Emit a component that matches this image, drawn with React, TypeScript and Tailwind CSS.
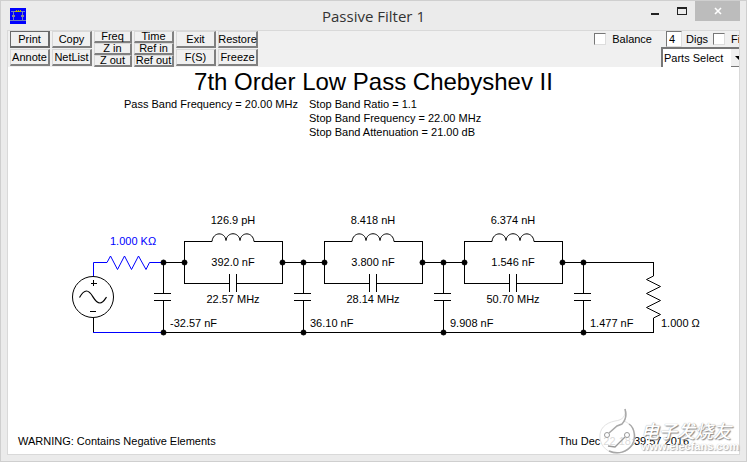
import type { ReactNode } from "react"

interface ToolButtonProps {
  children: ReactNode
  isDefault?: boolean
  small?: boolean
}

interface Tank {
  x: number
  inductor: string
  capacitor: string
  resonance: string
}

const tanks: Tank[] = [
  { x: 184, inductor: "126.9 pH", capacitor: "392.0 nF", resonance: "22.57 MHz" },
  { x: 324, inductor: "8.418 nH", capacitor: "3.800 nF", resonance: "28.14 MHz" },
  { x: 464, inductor: "6.374 nH", capacitor: "1.546 nF", resonance: "50.70 MHz" },
]

const shunts = [
  { x: 163, value: "-32.57 nF" },
  { x: 303, value: "36.10 nF" },
  { x: 443, value: "9.908 nF" },
  { x: 583, value: "1.477 nF" },
]

function ToolButton({ children, isDefault, small }: ToolButtonProps) {
  return (
    <button
      type="button"
      className={`flex w-full items-center justify-center whitespace-nowrap border-t border-l border-r-2 border-b-2 bg-[#f0f0f0] leading-none ${
        small ? "h-3 border-b" : "h-[17px]"
      } ${isDefault ? "border-[#696969]" : "border-t-[#d8d8d8] border-l-[#d8d8d8] border-r-[#808080] border-b-[#808080]"}`}
    >
      {children}
    </button>
  )
}

function AppIcon() {
  return (
    <svg className="size-4" viewBox="0 0 16 16" fill="none" shapeRendering="crispEdges" aria-hidden="true">
      <rect width="16" height="16" fill="#0000ff" />
      <path d="M1 3.5h14M0 12.500h16M3.500 3v10M12.500 3v10" stroke="#7080c0" />
      <path d="M2 7h3v2h-3zM11 7h3v2h-3z" fill="#8c8c8c" />
      <path d="M5 3.500h6M6 2.500h1M8 2.500h1M10 2.500h1" stroke="#b8b800" />
    </svg>
  )
}

function Dot({ x, y }: { x: number; y: number }) {
  return <circle cx={x} cy={y} r="2.5" fill="#000" />
}

function Schematic() {
  return (
    <svg
      className="mx-auto block h-auto w-full max-w-[731px] text-[11px]"
      viewBox="8 205 731 140"
      fill="none"
      stroke="#000"
      role="img"
      aria-label="Filter schematic"
    >
      {/* Source */}
      <circle cx="93" cy="297" r="20.5" />
      <path d="M93.5 263v13M93.5 318v14M93.5 280v6M90.5 283.5h6M90 311.5h6" shapeRendering="crispEdges" />
      <path d="M79.5 297.5C82 293 84 291 86.500 291C92.500 291 93.500 303 100 303C103 303 104.500 300 106.500 297" strokeWidth="1.2" />

      {/* Source resistor */}
      <path
        d="M93.500 276V262.500H107L110.500 256L117.500 269.500L124.500 256L131.500 269.500L138.500 256L146 269.500L149.500 262.500H163"
        stroke="#0000ff"
      />
      <path d="M93 332.500H163" stroke="#0000ff" />
      <text x="110" y="245" fill="#0000ff" stroke="none">1.000 KΩ</text>

      {/* Rails */}
      <path
        d="M163 262.500H184M282 262.500H324M422 262.500H464M562 262.500H653.500M163 332.500H654M653.500 262V276M653.500 318V333"
        shapeRendering="crispEdges"
      />

      {/* Series tanks */}
      {tanks.map((tank) => (
        <g key={tank.x} transform={`translate(${tank.x} 0)`}>
          <path
            d="M28 241.500H0.500V283.500H45M70 241.500H98.500V283.500H53M45.500 274V292M52.500 274V292"
            shapeRendering="crispEdges"
          />
          <path d="M28 241.500C29 231.500 41 231.500 42 240.500C43 231.500 55 231.500 56 240.500C57 231.500 69 231.500 70 241.500" />
          <Dot x={0.5} y={262.5} />
          <Dot x={98.5} y={262.5} />
          <g fill="#000" stroke="none" textAnchor="middle">
            <text x="49" y="224">{tank.inductor}</text>
            <text x="49" y="266">{tank.capacitor}</text>
            <text x="49" y="303">{tank.resonance}</text>
          </g>
        </g>
      ))}

      {/* Shunt capacitors */}
      {shunts.map((shunt) => (
        <g key={shunt.x} transform={`translate(${shunt.x} 0)`}>
          <path d="M0.500 262V293M0.500 301V332M-9 293.500H8M-9 300.500H8" shapeRendering="crispEdges" />
          <Dot x={0.5} y={262.5} />
          <Dot x={0.5} y={332.5} />
          <text x="7" y="327" fill="#000" stroke="none">{shunt.value}</text>
        </g>
      ))}

      {/* Load */}
      <path d="M653.500 276L646.500 279.500L660.500 286.500L646.500 293.500L660.500 300.500L646.500 307.500L660.500 314.500L653.500 318" />
      <text x="661" y="327" fill="#000" stroke="none">1.000 Ω</text>
    </svg>
  )
}

function Watermark() {
  return (
    <div className="absolute right-0 bottom-0 flex items-end gap-1 text-white" aria-hidden="true">
      <svg className="h-[46px] w-10" viewBox="0 0 40 46" fill="none">
        <path
          d="M28 1C29 8 26 12 18 13C8 15 2 21 3 30C4 39 11 45 20 45C30 45 38 38 38 28C38 20 32 15 27 13C29 10 30 6 28 1Z"
          fill="#fff"
          fillOpacity=".85"
          stroke="#e2e2e2"
        />
        <path d="M28 1C30 8 29 12 25 16L20 18L12 25M32 16C38 20 39 31 35 37C30 44 21 47 12 43" stroke="#a8a8a8" strokeWidth="1.500" />
        <path d="M28 29L18 39L11 38" stroke="#999" strokeWidth="1.300" />
        <circle cx="10" cy="27" r="2.500" fill="#fff" stroke="#999" />
        <circle cx="30" cy="27" r="2.500" fill="#fff" stroke="#999" />
      </svg>
      <div className="flex flex-col items-start pb-[2px]">
        <span className="font-['Noto_Sans_CJK_SC',sans-serif] text-lg leading-5 font-medium italic [text-shadow:1px_1px_1px_#888,0_0_1px_#999]">
          电子发烧友
        </span>
        <span className="text-[11px] leading-3 font-bold opacity-80 [text-shadow:1px_1px_1px_#999,0_0_1px_#bbb]">www.elecfans.com</span>
      </div>
    </div>
  )
}

export default function App() {
  return (
    <div className="flex min-h-screen flex-col border border-[#cfcfcf] bg-[#ebebeb] px-[6px] pb-[6px] font-['Liberation_Sans',Arial,sans-serif] text-[11px] text-black">
      {/* Title bar */}
      <header className="grid h-[29px] shrink-0 grid-cols-[1fr_auto_1fr] items-center">
        <div className="pl-[3px]">
          <AppIcon />
        </div>
        <h1 className="font-['Open_Sans',sans-serif] text-[15px] leading-5 text-[#333]">Passive Filter 1</h1>
        <div className="flex h-full items-start justify-end">
          <button type="button" aria-label="Minimize" className="flex h-5 w-7 items-end justify-center pb-[6px]">
            <span className="h-[2px] w-2 bg-[#222]" />
          </button>
          <button type="button" aria-label="Maximize" className="flex h-5 w-[26px] items-center justify-center">
            <span className="h-2 w-[10px] border border-t-2 border-[#222]" />
          </button>
          <button type="button" aria-label="Close" className="flex h-5 w-[45px] items-center justify-center bg-[#bcbcbc]">
            <svg className="size-2" viewBox="0 0 8 8" stroke="#fff" strokeWidth="1.600" aria-hidden="true">
              <path d="M1 1l6 6M7 1L1 7" />
            </svg>
          </button>
        </div>
      </header>

      <main className="relative flex grow flex-col border border-[#d9d9d9] bg-white">
        {/* Toolbar */}
        <div className="flex h-9 items-start bg-[#f0f0f0] pl-[2px]">
          <div className="grid shrink-0 grid-cols-[40px_40px_38px_40px_40px_40px] gap-x-[2px]">
            <div className="flex flex-col gap-px">
              <ToolButton isDefault>Print</ToolButton>
              <ToolButton>Annote</ToolButton>
            </div>
            <div className="flex flex-col gap-px">
              <ToolButton>Copy</ToolButton>
              <ToolButton>NetList</ToolButton>
            </div>
            <div className="flex flex-col">
              <ToolButton small>Freq</ToolButton>
              <ToolButton small>Z in</ToolButton>
              <ToolButton small>Z out</ToolButton>
            </div>
            <div className="flex flex-col">
              <ToolButton small>Time</ToolButton>
              <ToolButton small>Ref in</ToolButton>
              <ToolButton small>Ref out</ToolButton>
            </div>
            <div className="flex flex-col gap-px">
              <ToolButton>Exit</ToolButton>
              <ToolButton>F(S)</ToolButton>
            </div>
            <div className="flex flex-col gap-px">
              <ToolButton>Restore</ToolButton>
              <ToolButton>Freeze</ToolButton>
            </div>
          </div>

          <div className="ml-auto flex h-9 shrink-0 items-start">
            <label className="flex h-4 items-center gap-[6px]">
              <input type="checkbox" className="size-3 appearance-none border border-t-[#777] border-r-[#ddd] border-b-[#ddd] border-l-[#777] bg-white" />
              Balance
            </label>
            <div className="ml-[9px] flex h-9 w-[78px] flex-col overflow-hidden">
              <div className="flex h-4 items-center pl-[5px]">
                <label className="flex items-center gap-1">
                  <input
                    type="text"
                    defaultValue="4"
                    className="order-first h-4 w-4 border border-t-[#777] border-r-[#ddd] border-b-[#ddd] border-l-[#777] bg-white pl-[2px]"
                  />
                  Digs
                </label>
                <label className="ml-[5px] flex items-center gap-[6px] whitespace-nowrap">
                  <input type="checkbox" className="size-3 shrink-0 appearance-none border border-t-[#777] border-r-[#ddd] border-b-[#ddd] border-l-[#777] bg-white" />
                  Fi
                </label>
              </div>
              <div className="relative h-5 w-[86px] border-t-2 border-l-2 border-[#777] bg-white">
                <select aria-label="Parts Select" className="h-[18px] w-full appearance-none pl-px leading-none">
                  <option>Parts Select</option>
                </select>
                <span className="pointer-events-none absolute top-0 right-0 flex h-[18px] w-4 items-center justify-center border-r border-b border-[#777] bg-[#f0f0f0]">
                  <svg className="h-1 w-2" viewBox="0 0 8 4" aria-hidden="true">
                    <path d="M0 0h8L4 4z" />
                  </svg>
                </span>
              </div>
            </div>
          </div>
        </div>

        {/* Filter summary */}
        <h2 className="text-center text-2xl leading-[30px]">7th Order Low Pass Chebyshev II</h2>
        <div className="grid grid-cols-[185px_1fr] pl-[116px] leading-[14px]">
          <p>Pass Band Frequency = 20.00 MHz</p>
          <div>
            <p>Stop Band Ratio = 1.1</p>
            <p>Stop Band Frequency = 22.00 MHz</p>
            <p>Stop Band Attenuation = 21.00 dB</p>
          </div>
        </div>

        <div className="pt-[66px]">
          <Schematic />
        </div>

        <footer className="mt-auto flex justify-between pr-[50px] pb-[5px] pl-[10px] leading-4">
          <p>WARNING: Contains Negative Elements</p>
          <p>Thu Dec 22 18:39:57 2016</p>
        </footer>
        <Watermark />
      </main>
    </div>
  )
}
